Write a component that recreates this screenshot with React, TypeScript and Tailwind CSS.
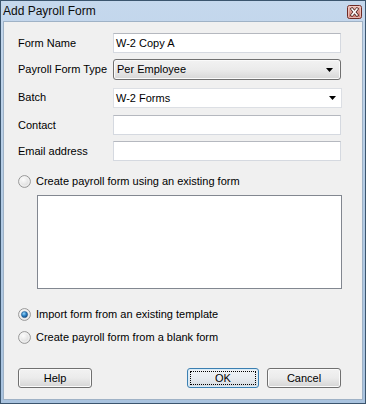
import React from "react";

function Radio({ checked }: { checked?: boolean }) {
  return (
    <svg width="13" height="13" viewBox="0 0 13 13" className="shrink-0">
      <defs>
        <radialGradient id="rg" cx="0.4" cy="0.35" r="0.7">
          <stop offset="0" stopColor="#fcfcfc" />
          <stop offset="1" stopColor="#d6d6d6" />
        </radialGradient>
        <radialGradient id="rb" cx="0.4" cy="0.35" r="0.7">
          <stop offset="0" stopColor="#9fd8f7" />
          <stop offset="0.5" stopColor="#2f86c9" />
          <stop offset="1" stopColor="#0d437c" />
        </radialGradient>
      </defs>
      <circle cx="6.5" cy="6.5" r="5.9" fill="url(#rg)" stroke="#979797" strokeWidth="1" />
      <circle cx="6.5" cy="6.5" r="4.6" fill="none" stroke="#f7f7f7" strokeWidth="0.8" />
      {checked && <circle cx="6.5" cy="6.5" r="3.1" fill="url(#rb)" stroke="#1b4f80" strokeWidth="0.5" />}
    </svg>
  );
}

function Arrow() {
  return (
    <svg width="7" height="4" viewBox="0 0 7 4" className="shrink-0">
      <path d="M0 0 H7 L3.5 4 Z" fill="#000" />
    </svg>
  );
}

export default function App() {
  const input =
    "h-[20px] flex-1 bg-white border border-[#d5d9e0] border-t-[#b5b8bf] flex items-center pl-[2px]";
  const btn =
    "h-[20px] rounded-[3px] border border-[#707070] bg-gradient-to-b from-[#f2f2f2] via-[#ebebeb] to-[#d5d5d5] shadow-[inset_0_0_0_1px_#fbfbfb] flex items-center justify-center";
  return (
    <div className="w-[366px] h-[404px] bg-gradient-to-b from-[#c5d8ed] via-[#b3cbe4] to-[#a9c3df] border border-[#3b556e] flex flex-col font-['Liberation_Sans',Arial,sans-serif] text-black">
      <div className="h-[20px] flex items-center justify-between pl-[2px] pr-[3px] shrink-0">
        <span className="text-[12px] leading-none text-[#0c0c0c]">Add Payroll Form</span>
        <svg width="15" height="14" viewBox="0 0 15 14" className="mt-[2px]">
          <defs>
            <linearGradient id="cl" x1="0" y1="0" x2="0" y2="1">
              <stop offset="0" stopColor="#eec1bb" />
              <stop offset="0.5" stopColor="#d9948b" />
              <stop offset="1" stopColor="#c9766c" />
            </linearGradient>
          </defs>
          <rect x="0.5" y="0.5" width="14" height="13" rx="2" fill="url(#cl)" stroke="#6e2a25" />
          <rect x="1.5" y="1.5" width="12" height="11" rx="1" fill="none" stroke="#f3d2cd" strokeWidth="0.7" />
          <path d="M5 4 L10 10 M10 4 L5 10" stroke="#3a1410" strokeWidth="3" strokeLinecap="square" />
          <path d="M5 4 L10 10 M10 4 L5 10" stroke="#fff" strokeWidth="1.6" strokeLinecap="square" />
        </svg>
      </div>
      <div className="flex-1 mx-[2px] mb-[3px] bg-[#f0f0f0] border border-[#9fb2c6] pl-[14px] pr-[21px] pt-[11px] flex flex-col text-[11px] leading-none">
        <div className="flex items-center h-[20px]">
          <span className="w-[95px] shrink-0">Form Name</span>
          <div className={input}>W-2 Copy A</div>
        </div>
        <div className="flex items-center h-[21px] mt-[6px]">
          <span className="w-[95px] shrink-0">Payroll Form Type</span>
          <div className="h-[21px] flex-1 rounded-[3px] border border-[#707070] bg-gradient-to-b from-[#f2f2f2] via-[#ebebeb] to-[#d7d7d7] flex items-center justify-between pl-[3px] pr-[7px] shadow-[inset_0_0_0_1px_#fafafa]">
            <span>Per Employee</span>
            <Arrow />
          </div>
        </div>
        <div className="flex items-start h-[20px] mt-[8px]">
          <span className="w-[95px] shrink-0 mt-[4px]">Batch</span>
          <div className="h-[20px] flex-1 -mr-[1px] bg-white border border-[#dcdfe4] flex items-center justify-between pl-[2px] pr-[5px]">
            <span>W-2 Forms</span>
            <Arrow />
          </div>
        </div>
        <div className="flex items-center h-[20px] mt-[7px]">
          <span className="w-[95px] shrink-0">Contact</span>
          <div className={input}></div>
        </div>
        <div className="flex items-center h-[20px] mt-[6px]">
          <span className="w-[95px] shrink-0">Email address</span>
          <div className={input}></div>
        </div>
        <div className="flex items-center h-[14px] mt-[13px] gap-[5px]">
          <Radio />
          <span>Create payroll form using an existing form</span>
        </div>
        <div className="h-[94px] ml-[19px] -mr-[1px] mt-[7px] bg-white border border-[#828790]"></div>
        <div className="flex items-center h-[14px] mt-[18px] gap-[5px]">
          <Radio checked />
          <span>Import form from an existing template</span>
        </div>
        <div className="flex items-center h-[14px] mt-[9px] gap-[5px]">
          <Radio />
          <span>Create payroll form from a blank form</span>
        </div>
        <div className="flex justify-between mt-[24px] h-[20px]">
          <div className={"w-[74px] " + btn}>Help</div>
          <div className="flex gap-[8px]">
            <div className="w-[72px] h-[20px] rounded-[3px] border border-[#3c7fb1] bg-gradient-to-b from-[#f0f3f6] via-[#e8ecf0] to-[#d3d9df] shadow-[inset_0_0_0_1px_#d8ecf8] flex items-center justify-center p-[2px]">
              <div className="w-full h-full border border-dotted border-black flex items-center justify-center">OK</div>
            </div>
            <div className={"w-[74px] " + btn}>Cancel</div>
          </div>
        </div>
      </div>
    </div>
  );
}
